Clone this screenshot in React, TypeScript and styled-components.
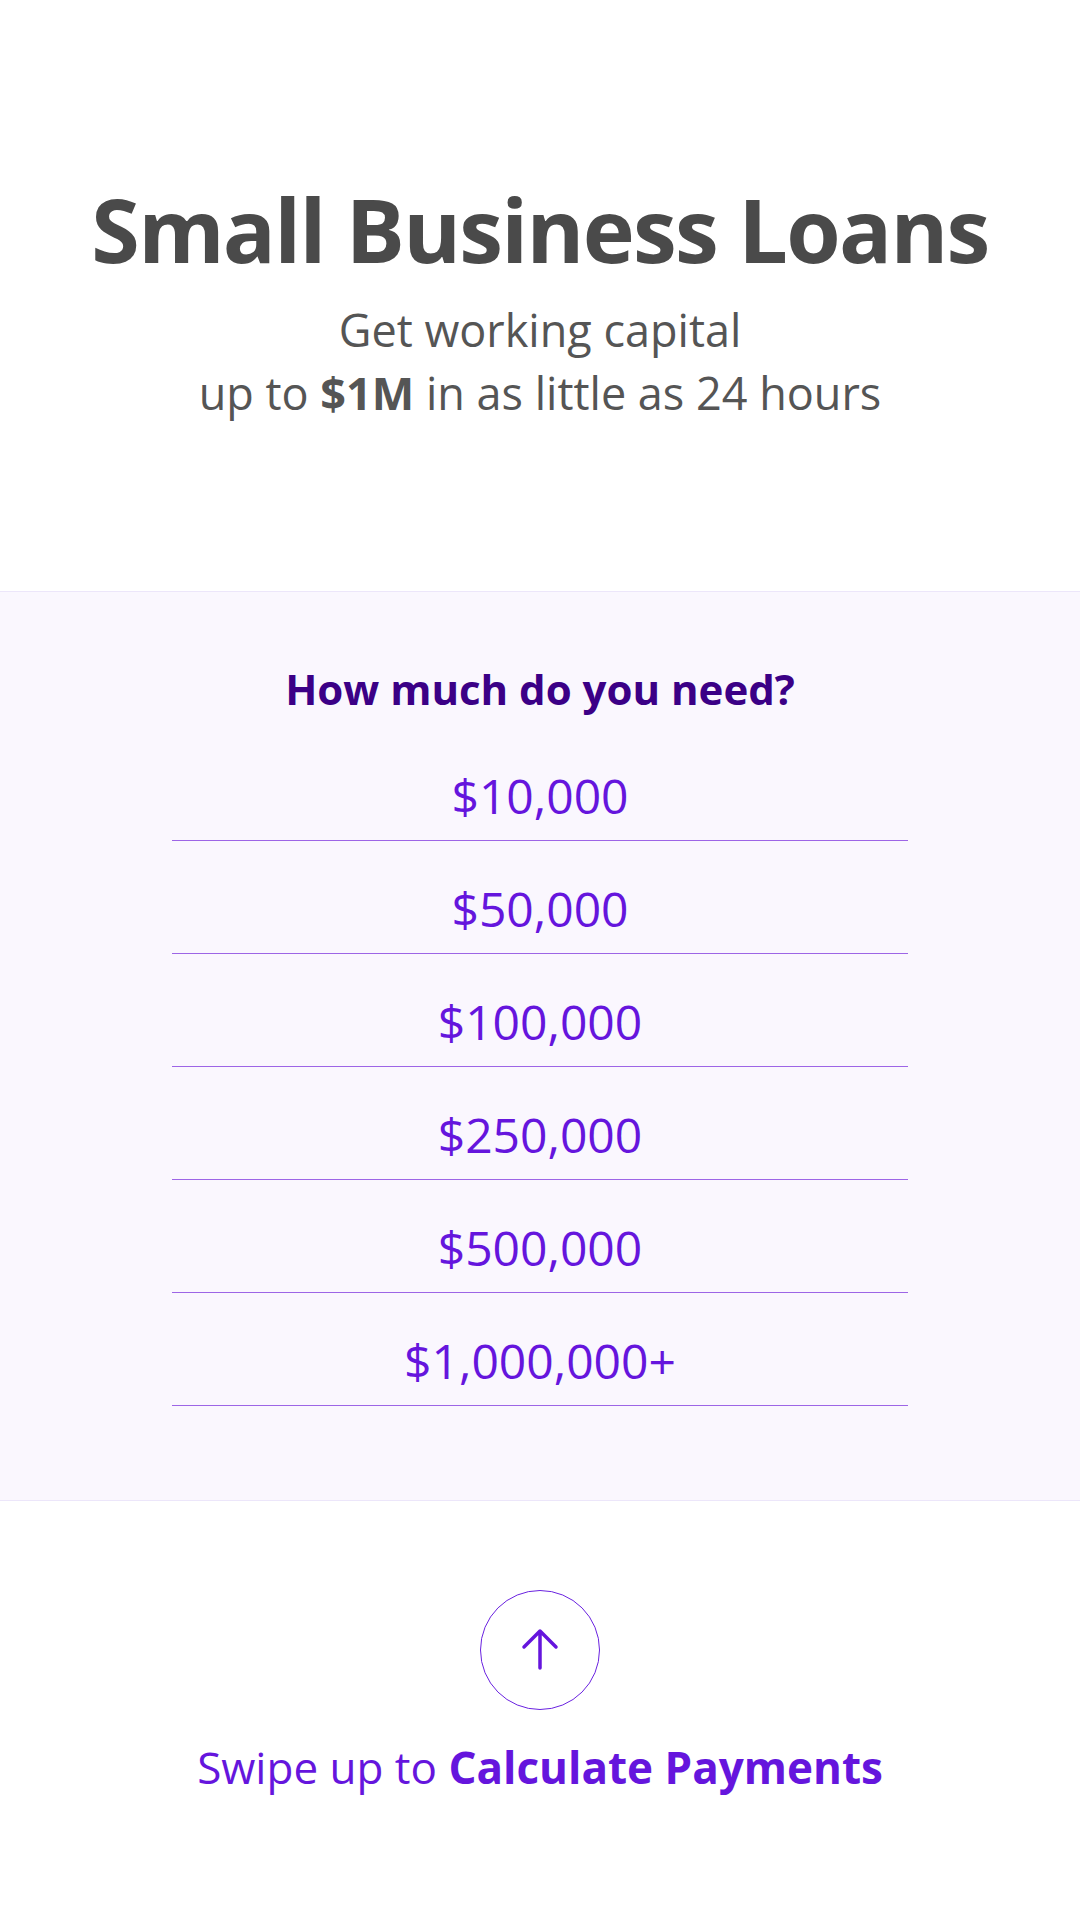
import * as React from "react"
import styled, { createGlobalStyle } from "styled-components"

const GlobalStyle = createGlobalStyle`
  body {
    margin: 0;
    background: #ffffff;
    font-family: "Open Sans", "Noto Sans", sans-serif;
  }
`

const Page = styled.main`
  width: 1080px;
  min-height: 1920px;
  background: #ffffff;
`

const Hero = styled.header`
  height: 591px;
  box-sizing: border-box;
  padding-top: 179px;
  text-align: center;
`

const Title = styled.h1`
  margin: 0;
  font-size: 88px;
  line-height: 100px;
  font-weight: 700;
  color: #4a4a4a;
  letter-spacing: -1.7px;
`

const Subtitle = styled.p`
  margin: 19px 0 0;
  font-size: 45px;
  line-height: 63px;
  font-weight: 400;
  color: #555555;

  strong {
    font-weight: 700;
  }
`

const Picker = styled.section`
  background: #faf7fe;
  border-top: 1px solid #ece6fa;
  border-bottom: 1px solid #ece6fa;
  padding: 69px 0 94px;
  display: flex;
  flex-direction: column;
  align-items: center;
`

const Question = styled.h2`
  margin: 0 0 11px;
  font-size: 42px;
  line-height: 56px;
  font-weight: 700;
  color: #3b0086;
`

const Options = styled.ul`
  list-style: none;
  margin: 0;
  padding: 0;
  width: 736px;
`

const Option = styled.li`
  height: 112px;
  border-bottom: 1px solid #9d65e6;
  text-align: center;
`

const OptionLabel = styled.span`
  display: block;
  padding-top: 38px;
  font-size: 48px;
  line-height: 60px;
  color: #6515dd;
`

const Footer = styled.footer`
  padding-top: 89px;
  display: flex;
  flex-direction: column;
  align-items: center;
`

const SwipeButton = styled.button`
  width: 120px;
  height: 120px;
  border-radius: 50%;
  border: 1px solid #6a22e0;
  background: transparent;
  padding: 0;
  display: flex;
  align-items: center;
  justify-content: center;
  cursor: pointer;
`

const SwipeText = styled.p`
  margin: 29px 0 0;
  font-size: 44px;
  line-height: 56px;
  font-weight: 400;
  color: #6515dd;

  strong {
    font-weight: 700;
  }
`

const amounts = ["$10,000", "$50,000", "$100,000", "$250,000", "$500,000", "$1,000,000+"]

const ArrowUp = () => (
  <svg width="40" height="44" viewBox="0 0 40 44" fill="none">
    <path
      d="M20 3 L20 40 M4 19 L20 3 L36 19"
      stroke="#6515dd"
      strokeWidth="3.5"
      strokeLinecap="round"
      strokeLinejoin="round"
    />
  </svg>
)

const App: React.FC = () => {
  return (
    <Page>
      <GlobalStyle />
      <Hero>
        <Title>Small Business Loans</Title>
        <Subtitle>
          Get working capital
          <br />
          up to <strong>$1M</strong> in as little as 24 hours
        </Subtitle>
      </Hero>
      <Picker>
        <Question>How much do you need?</Question>
        <Options>
          {amounts.map((a) => (
            <Option key={a}>
              <OptionLabel>{a}</OptionLabel>
            </Option>
          ))}
        </Options>
      </Picker>
      <Footer>
        <SwipeButton aria-label="Swipe up">
          <ArrowUp />
        </SwipeButton>
        <SwipeText>
          Swipe up to <strong>Calculate Payments</strong>
        </SwipeText>
      </Footer>
    </Page>
  )
}

export default App
